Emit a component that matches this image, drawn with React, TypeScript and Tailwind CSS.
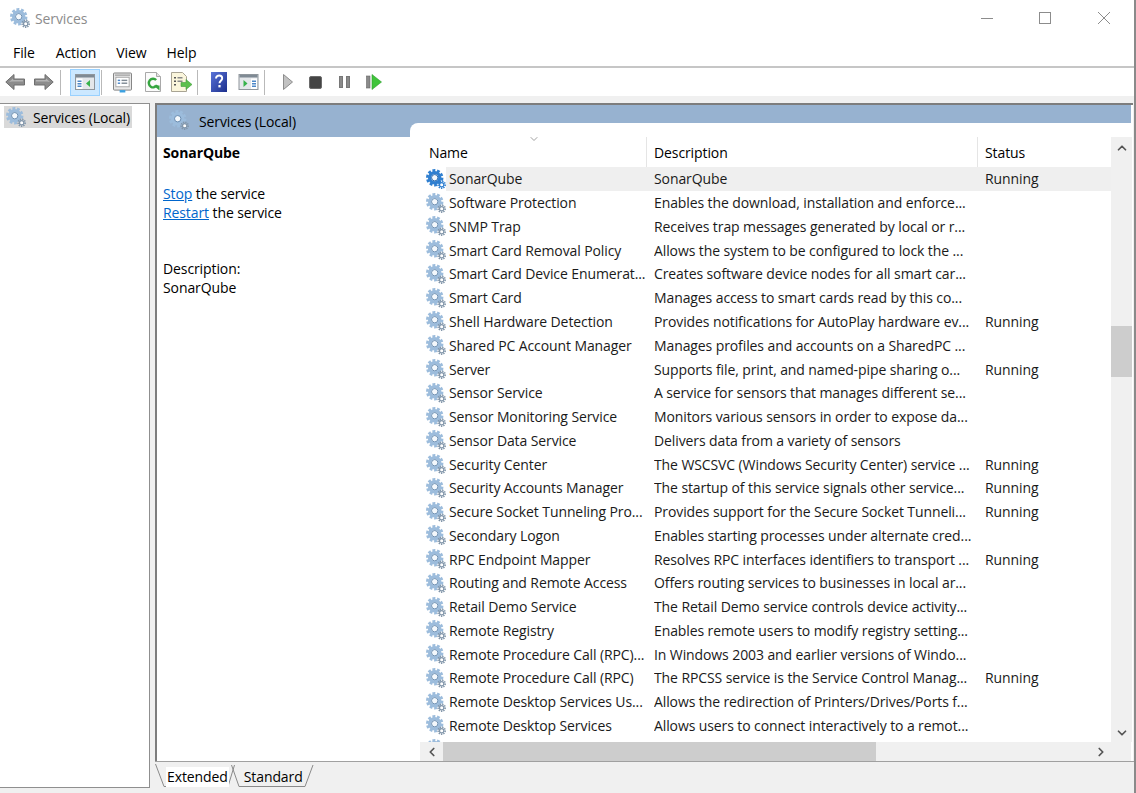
import { ChevronDown, ChevronLeft, ChevronRight, ChevronUp } from "lucide-react";

const SERVICES: [string, string, string][] = [
  ["SonarQube", "SonarQube", "Running"],
  ["Software Protection", "Enables the download, installation and enforce...", ""],
  ["SNMP Trap", "Receives trap messages generated by local or r...", ""],
  ["Smart Card Removal Policy", "Allows the system to be configured to lock the ...", ""],
  ["Smart Card Device Enumerat...", "Creates software device nodes for all smart car...", ""],
  ["Smart Card", "Manages access to smart cards read by this co...", ""],
  ["Shell Hardware Detection", "Provides notifications for AutoPlay hardware ev...", "Running"],
  ["Shared PC Account Manager", "Manages profiles and accounts on a SharedPC ...", ""],
  ["Server", "Supports file, print, and named-pipe sharing o...", "Running"],
  ["Sensor Service", "A service for sensors that manages different se...", ""],
  ["Sensor Monitoring Service", "Monitors various sensors in order to expose da...", ""],
  ["Sensor Data Service", "Delivers data from a variety of sensors", ""],
  ["Security Center", "The WSCSVC (Windows Security Center) service ...", "Running"],
  ["Security Accounts Manager", "The startup of this service signals other service...", "Running"],
  ["Secure Socket Tunneling Pro...", "Provides support for the Secure Socket Tunneli...", "Running"],
  ["Secondary Logon", "Enables starting processes under alternate cred...", ""],
  ["RPC Endpoint Mapper", "Resolves RPC interfaces identifiers to transport ...", "Running"],
  ["Routing and Remote Access", "Offers routing services to businesses in local ar...", ""],
  ["Retail Demo Service", "The Retail Demo service controls device activity...", ""],
  ["Remote Registry", "Enables remote users to modify registry setting...", ""],
  ["Remote Procedure Call (RPC)...", "In Windows 2003 and earlier versions of Windo...", ""],
  ["Remote Procedure Call (RPC)", "The RPCSS service is the Service Control Manag...", "Running"],
  ["Remote Desktop Services Us...", "Allows the redirection of Printers/Drives/Ports f...", ""],
  ["Remote Desktop Services", "Allows users to connect interactively to a remot...", ""],
  ["", "", ""],
];

function Gear({ active = false, className = "w-5 h-5" }: { active?: boolean; className?: string }) {
  const main = active ? "#2f7fd0" : "#9cbcdc";
  const dark = active ? "#1c5fa8" : "#5f86ad";
  const small = active ? "#2f7fd0" : "#8296aa";
  return (
    <svg viewBox="0 0 19.500 19.500" className={`${className} shrink-0`}>
      <circle cx="8.500" cy="8.500" r="7.200" fill="none" stroke={main} strokeWidth="2.600" strokeDasharray="2.800 1.700" />
      <circle cx="8.500" cy="8.500" r="5" fill="none" stroke={main} strokeWidth="3.200" />
      <circle cx="8.500" cy="8.500" r="3.100" fill="#f4f8fc" stroke={dark} strokeWidth="0.900" />
      <circle cx="15.300" cy="15.300" r="3.400" fill="none" stroke={small} strokeWidth="1.600" strokeDasharray="1.300 1" />
      <circle cx="15.300" cy="15.300" r="2.100" fill="#fff" stroke={small} strokeWidth="1.200" />
    </svg>
  );
}

function Arrow({ flip = false }: { flip?: boolean }) {
  return (
    <svg viewBox="0 0 20 18" className={`w-5 h-[18px] ${flip ? "-scale-x-100" : ""}`}>
      <path d="M0.800 9 9 1.500V6h10.500v6H9v4.500z" fill="#8c8c8c" stroke="#6e6e6e" strokeWidth="1" />
      <path d="M4 9 8 5.500V7h10v1.500H7z" fill="#b4b4b4" />
    </svg>
  );
}

function Sep({ ml }: { ml: string }) {
  return <div className={`w-[2px] h-[25px] bg-[#b9b9b9] border-r border-white ${ml}`} />;
}

function ConsoleIcon() {
  return (
    <svg viewBox="0 0 20 20" className="w-5 h-5">
      <rect x="0.500" y="2.500" width="19" height="15" fill="#e4e7ea" stroke="#8f969c" />
      <rect x="1" y="3" width="18" height="2.500" fill="#7f8a94" />
      <rect x="1.500" y="6.500" width="6" height="10.500" fill="#fff" />
      <rect x="2.500" y="8.500" width="4" height="1.500" fill="#4d87c7" />
      <rect x="2.500" y="11" width="4" height="1.500" fill="#4d87c7" />
      <rect x="2.500" y="13.500" width="4" height="1.500" fill="#4d87c7" />
      <path d="M15 8v7l-4-3.500z" fill="#36b24a" />
    </svg>
  );
}

function PropertiesIcon() {
  return (
    <svg viewBox="0 0 20 22" className="w-[19px] h-[21px]">
      <rect x="0.500" y="1" width="19" height="18" rx="1" fill="#e8e8e8" stroke="#7d7d7d" />
      <rect x="2" y="2.500" width="16" height="1.500" fill="#a8a8a8" />
      <rect x="3" y="5.500" width="14" height="10" fill="#fff" stroke="#a6a6a6" />
      <rect x="5" y="8" width="2.500" height="1.500" fill="#4d87c7" />
      <rect x="9" y="8" width="6" height="1.500" fill="#7f8a94" />
      <rect x="5" y="11" width="2.500" height="1.500" fill="#4d87c7" />
      <rect x="9" y="11" width="6" height="1.500" fill="#7f8a94" />
      <rect x="7" y="19" width="6" height="2.500" fill="#3aa0e0" />
    </svg>
  );
}

function RefreshIcon() {
  return (
    <svg viewBox="0 0 16 20" className="w-4 h-5">
      <path d="M0.500 0.500h11l4 4v15H0.500z" fill="#fbfbfb" stroke="#a9a9a9" />
      <path d="M11.500 0.500v4h4" fill="#e4e4e4" stroke="#a9a9a9" />
      <path d="M12 13a4.300 4.300 0 1 1-.8-5" fill="none" stroke="#35a53f" strokeWidth="2.400" />
      <path d="M8.500 13.500h6v5z" fill="#35a53f" />
    </svg>
  );
}

function ExportIcon() {
  return (
    <svg viewBox="0 0 21 20" className="w-[21px] h-5">
      <path d="M0.500 0.500h11l4 4v15H0.500z" fill="#fbf6dc" stroke="#a9a494" />
      <rect x="3" y="5" width="2" height="1.500" fill="#555" />
      <rect x="6.500" y="5" width="5" height="1.500" fill="#888" />
      <rect x="3" y="8.500" width="2" height="1.500" fill="#555" />
      <rect x="6.500" y="8.500" width="5" height="1.500" fill="#888" />
      <rect x="3" y="12" width="2" height="1.500" fill="#555" />
      <path d="M10 10.500h5V7.500l6 5-6 5v-3h-5z" fill="#5cc04c" stroke="#3f9c3c" strokeWidth="0.600" />
    </svg>
  );
}

function HelpIcon() {
  return (
    <svg viewBox="0 0 16 20" className="w-4 h-5">
      <defs>
        <linearGradient id="helpBg" x1="0" y1="0" x2="1" y2="1">
          <stop offset="0" stopColor="#5a73d8" />
          <stop offset="1" stopColor="#1c2f8c" />
        </linearGradient>
      </defs>
      <rect width="16" height="20" fill="url(#helpBg)" />
      <path d="M5 6.500C5 4.500 6.500 3.500 8.200 3.500s3 1.100 3 2.800c0 2.500-2.700 2.500-2.700 5" fill="none" stroke="#fff" strokeWidth="1.900" />
      <rect x="7.400" y="13" width="2.200" height="2.400" fill="#fff" />
    </svg>
  );
}

function ActionPaneIcon() {
  return (
    <svg viewBox="0 0 20 20" className="w-[21px] h-[20px]">
      <rect x="0.500" y="2.500" width="19" height="15" fill="#e4e7ea" stroke="#8f969c" />
      <rect x="1" y="3" width="18" height="2.500" fill="#7f8a94" />
      <rect x="12.500" y="6.500" width="6" height="10.500" fill="#fff" />
      <rect x="13.500" y="8.500" width="4" height="1.500" fill="#4d87c7" />
      <rect x="13.500" y="11" width="4" height="1.500" fill="#4d87c7" />
      <rect x="13.500" y="13.500" width="4" height="1.500" fill="#4d87c7" />
      <path d="M5 8v7l4-3.500z" fill="#36b24a" />
    </svg>
  );
}

function MediaIcons() {
  return (
    <>
      <svg viewBox="0 0 10 16" className="w-[10px] h-4 ml-[17px]">
        <path d="M0.500 0.500 9.500 8l-9 7.500z" fill="#c2c2c2" stroke="#8d8d8d" />
      </svg>
      <div className="w-[13px] h-[13px] ml-[16px] rounded-[2px] bg-[#444] border border-[#6b6b6b]" />
      <div className="flex gap-[3px] ml-[17px]">
        <div className="w-[4px] h-[12px] bg-[#8a8a8a] border border-[#777]" />
        <div className="w-[4px] h-[12px] bg-[#8a8a8a] border border-[#777]" />
      </div>
      <svg viewBox="0 0 16 16" className="w-4 h-4 ml-[16px]">
        <rect x="0.500" y="2" width="3.500" height="12" fill="#8a8a8a" stroke="#666" strokeWidth="0.600" />
        <path d="M6 0.500 15.500 8 6 15.500z" fill="#3fc43a" stroke="#2b9c2c" strokeWidth="0.600" />
      </svg>
    </>
  );
}

function Tabs() {
  return (
    <div className="relative h-[26px] flex items-start pl-[11px] pt-[5px] bg-[#f0f0f0] text-black">
      <svg viewBox="0 0 170 26" className="absolute left-0 top-0 w-[170px] h-[26px]" fill="none" stroke="#8a8a8a">
        <path d="M0.500 2 9 24.500h64L79.500 3" />
        <path d="M76.500 3 84 24.500h66L158 3" />
      </svg>
      <span className="relative px-[1px] bg-white leading-[20px]">Extended</span>
      <span className="relative ml-[15px] leading-[20px]">Standard</span>
    </div>
  );
}

export default function App() {
  return (
    <div className="w-[1136px] h-[793px] bg-white flex flex-col overflow-hidden border-r-2 border-[#8a8a8a] text-[14px] tracking-[-0.1px] text-[#1a1a1a] font-['Open_Sans','Noto_Sans',sans-serif]">
      {/* title bar */}
      <div className="h-[36px] flex items-center shrink-0 pl-[10px]">
        <Gear className="w-5 h-5" />
        <span className="ml-[5px] text-[#8c8c8c]">Services</span>
        <div className="ml-auto flex items-center">
          <div className="w-[12px] h-[1px] bg-[#8c8c8c]" />
          <div className="ml-[46px] w-[12px] h-[12px] border border-[#8c8c8c]" />
          <svg viewBox="0 0 12 12" className="ml-[47px] mr-[24px] w-[12px] h-[12px]" stroke="#8c8c8c">
            <path d="M0 0 12 12M12 0 0 12" />
          </svg>
        </div>
      </div>

      {/* menu */}
      <div className="h-[30px] flex items-center shrink-0 pl-[13px] pt-[2px] text-black">
        <span>File</span>
        <span className="ml-[21px]">Action</span>
        <span className="ml-[20px]">View</span>
        <span className="ml-[20px]">Help</span>
      </div>

      {/* toolbar */}
      <div className="h-[30px] flex items-center shrink-0 pl-[5px] border-t-2 border-[#c6c6c6]">
        <Arrow />
        <div className="ml-[9px]"><Arrow flip /></div>
        <Sep ml="ml-[6px]" />
        <div className="ml-[8px] w-[30px] h-[27px] flex items-center justify-center bg-[#cce8ff] border border-[#99d1ff]">
          <ConsoleIcon />
        </div>
        <Sep ml="ml-[1px]" />
        <div className="ml-[10px]"><PropertiesIcon /></div>
        <div className="ml-[13px]"><RefreshIcon /></div>
        <div className="ml-[10px]"><ExportIcon /></div>
        <Sep ml="ml-[5px]" />
        <div className="ml-[12px]"><HelpIcon /></div>
        <div className="ml-[11px]"><ActionPaneIcon /></div>
        <Sep ml="ml-[5px]" />
        <MediaIcons />
      </div>

      {/* main */}
      <div className="flex-1 min-h-0 flex bg-[#f0f0f0] pt-[7px]">
        <div className="w-[150px] shrink-0 bg-white border-t border-r border-b border-[#8f8f8f] mb-[5px] pt-[2px] pl-[4px]">
          <div className="w-[128px] h-[22px] flex items-center bg-[#d9d9d9] pl-[2px] text-black">
            <Gear />
            <span className="ml-[7px]">Services (Local)</span>
          </div>
        </div>

        <div className="ml-[5px] flex-1 min-w-0 flex flex-col mb-[5px]">
          <div className="flex-1 min-h-0 flex flex-col bg-white border-t-2 border-l-2 border-[#7d7d7d] mr-[1px]">
            <div className="h-[32px] shrink-0 bg-[#97b2d0] flex items-start pt-[5px] pl-[12px] mr-[2px] text-black">
              <Gear />
              <span className="ml-[10px] mt-[1px]">Services (Local)</span>
            </div>
            <div className="flex-1 min-h-0 flex">
              <div className="w-[253px] shrink-0 pl-[6px] pt-[6px] text-black">
                <div className="font-bold h-[20px] leading-[20px]">SonarQube</div>
                <div className="mt-[21px] leading-[19px]">
                  <a className="text-[#0066cc] underline">Stop</a> the service
                </div>
                <div className="leading-[19px]">
                  <a className="text-[#0066cc] underline">Restart</a> the service
                </div>
                <div className="mt-[37px] leading-[19px]">Description:</div>
                <div className="leading-[19px]">SonarQube</div>
              </div>

              <div className="flex-1 min-w-0 -mt-[14px] bg-white rounded-tl-[8px] flex flex-col pt-[14px] pl-[10px]">
                <div className="flex-1 min-h-0 flex">
                  <div className="w-[691px] shrink-0 flex flex-col">
                    <div className="h-[30px] shrink-0 flex text-black relative">
                      <div className="w-[227px] pl-[9px] pt-[5px] border-r border-[#e5e5e5]">Name</div>
                      <div className="w-[331px] pl-[7px] pt-[5px] border-r border-[#e5e5e5]">Description</div>
                      <div className="pl-[7px] pt-[5px]">Status</div>
                      <ChevronDown className="absolute left-[108px] -top-[4px] w-[12px] h-[12px] text-[#a0a0a0]" />
                    </div>
                    <div className="flex-1 min-h-0 overflow-hidden">
                      {SERVICES.map(([name, desc, status], i) => (
                        <div key={i} className="h-[23.78px] flex items-center pl-[6px]">
                          <Gear active={i === 0} />
                          <div className={`flex-1 h-full flex items-center whitespace-nowrap ${i === 0 ? "bg-[#efefef]" : ""}`}>
                            <div className="w-[208px] pl-[3px] truncate">{name}</div>
                            <div className="w-[331px] truncate">{desc}</div>
                            <div>{status}</div>
                          </div>
                        </div>
                      ))}
                    </div>
                  </div>
                  <div className="w-[21px] shrink-0 bg-[#f0f0f0] flex flex-col items-center relative">
                    <ChevronUp className="mt-[4px] w-[14px] h-[14px] text-[#555]" strokeWidth={3} />
                    <div className="mt-[171px] w-full h-[51px] bg-[#cdcdcd]" />
                    <ChevronDown className="mt-auto mb-[2px] w-[14px] h-[14px] text-[#555]" strokeWidth={3} />
                  </div>
                </div>
                <div className="h-[19px] shrink-0 bg-[#f0f0f0] flex items-center mr-[2px]">
                  <ChevronLeft className="ml-[5px] w-[14px] h-[14px] text-[#555]" strokeWidth={3} />
                  <div className="ml-[4px] w-[433px] h-full bg-[#cdcdcd]" />
                  <ChevronRight className="ml-auto mr-[23px] w-[14px] h-[14px] text-[#555]" strokeWidth={3} />
                </div>
              </div>
            </div>
          </div>
          <div className="border-t border-[#a0a0a0]">
            <Tabs />
          </div>
        </div>
      </div>
    </div>
  );
}
